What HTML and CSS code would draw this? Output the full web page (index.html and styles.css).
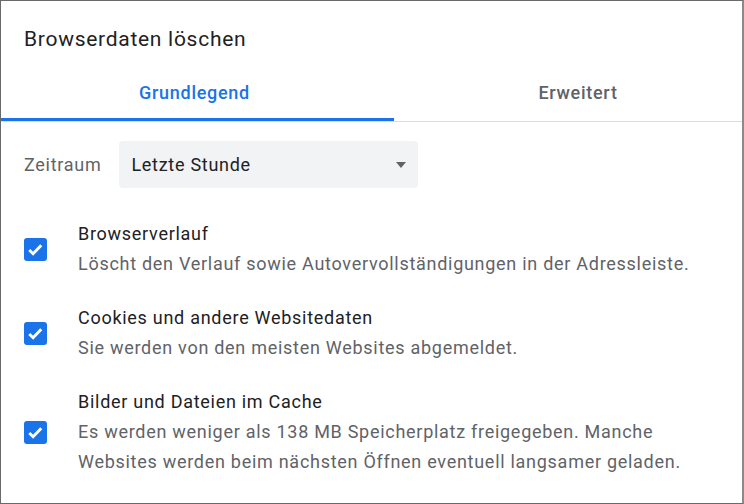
FILE: index.html
```html
<!DOCTYPE html>
<html lang="de">
<head>
    <meta charset="UTF-8">
    <meta name="viewport" content="width=device-width, initial-scale=1.0">
    <title>Browserdaten löschen</title>
    <link rel="stylesheet" href="styles.css">
</head>
<body>
    <div class="dialog">
        <h1 class="title">Browserdaten löschen</h1>

        <div class="tabs">
            <div class="tab active">Grundlegend</div>
            <div class="tab">Erweitert</div>
        </div>

        <div class="range">
            <span class="range-label">Zeitraum</span>
            <div class="select">
                <span>Letzte Stunde</span>
                <span class="arrow"></span>
            </div>
        </div>

        <div class="option">
            <span class="checkbox">
                <svg viewBox="0 0 24 24"><path d="M5.5 12.5l4 4 8.5-9"/></svg>
            </span>
            <div class="option-text">
                <div class="option-title">Browserverlauf</div>
                <div class="option-desc">Löscht den Verlauf sowie Autovervollständigungen in der Adressleiste.</div>
            </div>
        </div>

        <div class="option">
            <span class="checkbox">
                <svg viewBox="0 0 24 24"><path d="M5.5 12.5l4 4 8.5-9"/></svg>
            </span>
            <div class="option-text">
                <div class="option-title">Cookies und andere Websitedaten</div>
                <div class="option-desc">Sie werden von den meisten Websites abgemeldet.</div>
            </div>
        </div>

        <div class="option">
            <span class="checkbox">
                <svg viewBox="0 0 24 24"><path d="M5.5 12.5l4 4 8.5-9"/></svg>
            </span>
            <div class="option-text">
                <div class="option-title">Bilder und Dateien im Cache</div>
                <div class="option-desc">Es werden weniger als 138 MB Speicherplatz freigegeben. Manche Websites werden beim nächsten Öffnen eventuell langsamer geladen.</div>
            </div>
        </div>
    </div>
</body>
</html>
```

FILE: styles.css
```css
body {
    margin: 0;
    font-family: Roboto, "Liberation Sans", sans-serif;
    letter-spacing: 0.72px;
    background: #ffffff;
}

.dialog {
    width: 744px;
    height: 504px;
    box-sizing: border-box;
    border: 1px solid #6a6a6a;
    border-right: 2px solid #8a8a8a;
    overflow: hidden;
}

.title {
    margin: 0;
    padding: 26px 23px 0;
    font-size: 21px;
    line-height: 24px;
    font-weight: 400;
    color: #202124;
}

.tabs {
    display: flex;
    margin-top: 12px;
    border-bottom: 1px solid #dadce0;
}

.tab {
    height: 58px;
    display: flex;
    align-items: center;
    justify-content: center;
    font-size: 18px;
    font-weight: 500;
    color: #5f6368;
}

.tab:first-child {
    width: 393px;
    box-sizing: border-box;
    padding-right: 6px;
}

.tab:last-child {
    flex: 1;
    padding-left: 20px;
}

.tab.active {
    color: #1a73e8;
    box-shadow: inset 0 -3px 0 #1a73e8;
}

.range {
    display: flex;
    align-items: center;
    gap: 18px;
    margin-top: 19px;
    padding: 0 23px;
}

.range-label {
    font-size: 18px;
    color: #5f6368;
}

.select {
    width: 299px;
    height: 47px;
    box-sizing: border-box;
    display: flex;
    align-items: center;
    justify-content: space-between;
    padding: 0 12px;
    background: #f1f3f4;
    border-radius: 4px;
    font-size: 18px;
    color: #202124;
}

.arrow {
    width: 0;
    height: 0;
    border-left: 5px solid transparent;
    border-right: 5px solid transparent;
    border-top: 6px solid #5f6368;
}

.option {
    display: flex;
    align-items: center;
    gap: 31px;
    margin-top: 24px;
    padding: 0 40px 0 23px;
}

.range + .option {
    margin-top: 31px;
}

.checkbox {
    flex: none;
    width: 23px;
    height: 23px;
    border-radius: 3px;
    background: #1a73e8;
    display: flex;
}

.checkbox svg {
    width: 23px;
    height: 23px;
    fill: none;
    stroke: #ffffff;
    stroke-width: 3;
}

.option-text {
    font-size: 18px;
    line-height: 30px;
}

.option-title {
    color: #202124;
}

.option-desc {
    color: #5f6368;
}
```
